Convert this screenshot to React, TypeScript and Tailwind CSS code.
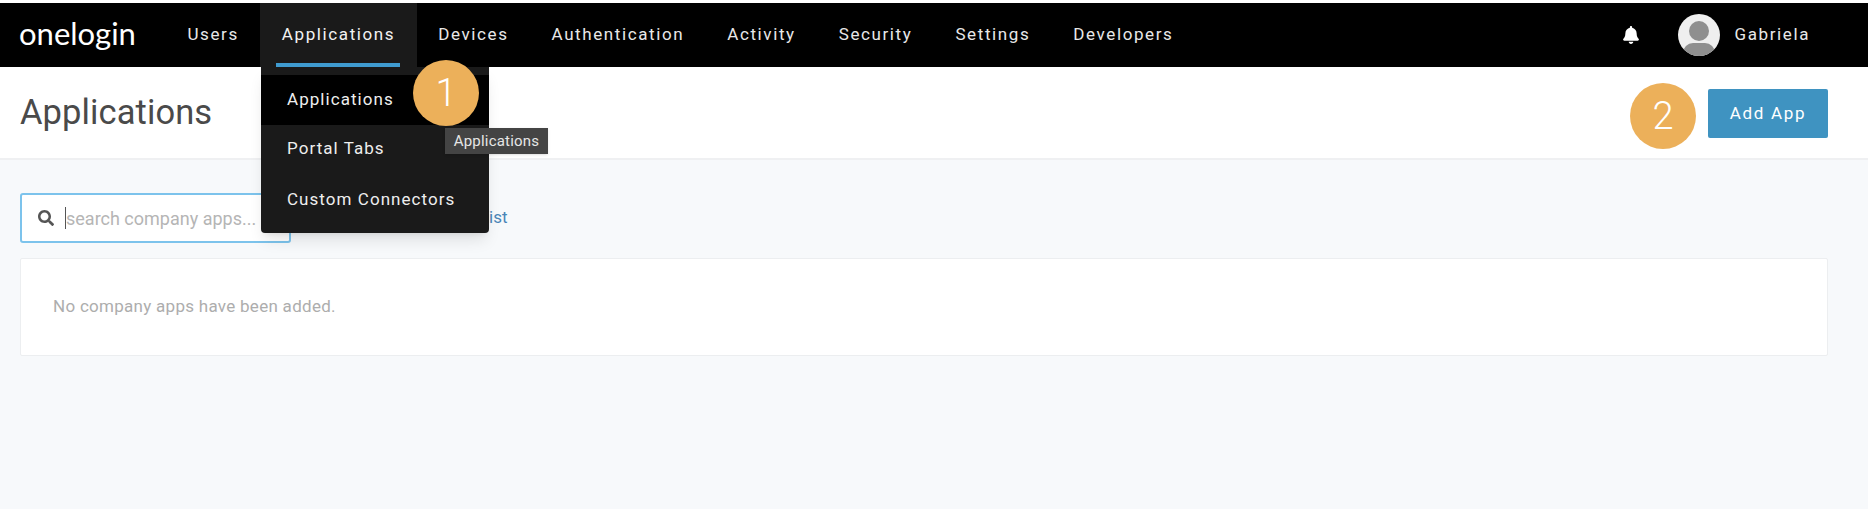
import { FaBell, FaSearch } from "react-icons/fa";

const navItems = ["Users", "Applications", "Devices", "Authentication", "Activity", "Security", "Settings", "Developers"];

function NavItem({ label }: { label: string }) {
  const active = label === "Applications";
  return (
    <div className={`relative h-full flex items-center px-[21.5px] text-[17px] tracking-[1.6px] ${active ? "bg-[#1a1a1a] text-[#f2f2f2]" : "text-[#e8e8e8]"}`}>
      {label}
      {active && <div className="absolute left-[16px] right-[17px] bottom-0 h-[4px] bg-[#3f9bd0]" />}
    </div>
  );
}

function Badge({ n, className }: { n: string; className: string }) {
  return (
    <div className={`absolute w-[66px] h-[66px] rounded-full bg-[#ecb05a] text-white flex items-center justify-center text-[38px] font-light ${className}`}>
      {n}
    </div>
  );
}

export default function App() {
  return (
    <main className="relative w-[1870px] h-[522px] overflow-hidden bg-white pt-[3px] pr-[2px] font-['Roboto',sans-serif]">
      <nav className="h-[64px] bg-black flex items-center pl-[19px] pr-[58px]">
        <div className="w-[147px] text-white text-[31px] leading-none font-['Lato',sans-serif] -mt-[4px]">onelogin</div>
        <div className="h-full flex">
          {navItems.map((item) => (
            <NavItem key={item} label={item} />
          ))}
        </div>
        <div className="ml-auto flex items-center">
          <FaBell className="text-white text-[18px] mr-[38px]" />
          <div className="relative w-[42px] h-[42px] rounded-full bg-[#efefef] overflow-hidden mr-[15px]">
            <div className="absolute left-[11px] top-[7px] w-[20px] h-[20px] rounded-full bg-[#8f8f8f]" />
            <div className="absolute left-[5px] top-[29px] w-[32px] h-[20px] rounded-t-[10px] bg-[#8f8f8f]" />
          </div>
          <span className="text-[17px] tracking-[1.6px] text-[#e8e8e8]">Gabriela</span>
        </div>
      </nav>

      <header className="h-[93px] bg-white border-b-2 border-[#eff0f2] flex items-center justify-between pl-[20px] pr-[40px]">
        <h1 className="text-[34.5px] text-[#4a4a4a] tracking-[0.1px]">Applications</h1>
        <button className="w-[120px] h-[49px] mt-[2px] rounded-[2px] bg-[#3f93c1] text-white text-[17px] tracking-[1.7px]">Add App</button>
      </header>

      <section className="h-[349px] bg-[#f7f9fb] pl-[20px] pr-[40px] pt-[33px]">
        <div className="flex items-center h-[50px]">
          <div className="w-[271px] h-full bg-white border-2 border-[#7cc3ec] rounded-[3px] flex items-center pl-[16px]">
            <FaSearch className="text-[#555] text-[16px] mr-[11px]" />
            <div className="w-[1px] h-[22px] bg-[#555]" />
            <span className="text-[18px] text-[#b5b5b5] whitespace-nowrap">search company apps...</span>
          </div>
          <a className="ml-[198px] text-[17px] text-[#4a86b8]">ist</a>
        </div>
        <div className="mt-[15px] h-[98px] bg-white border border-[#eceef0] rounded-[2px] flex items-center pl-[32px] text-[17px] tracking-[0.28px] text-[#adadad]">
          No company apps have been added.
        </div>
      </section>

      <div className="absolute left-[261px] top-[67px] w-[228px] h-[166px] bg-[#1a1a1a] rounded-b-[4px] shadow-lg pt-[8px] text-[17px] tracking-[1.05px] text-[#eeeeee]">
        <div className="h-[50px] bg-black flex items-center pl-[26px]">Applications</div>
        <div className="h-[47px] flex items-center pl-[26px]">Portal Tabs</div>
        <div className="h-[55px] flex items-center pl-[26px]">Custom Connectors</div>
      </div>

      <div className="absolute left-[445px] top-[128px] w-[103px] h-[26px] bg-[#444444] shadow flex items-center justify-center text-[15px] tracking-[0.2px] text-[#e6e6e6]">Applications</div>

      <Badge n="1" className="left-[413px] top-[60px]" />
      <Badge n="2" className="left-[1630px] top-[83px]" />
    </main>
  );
}
